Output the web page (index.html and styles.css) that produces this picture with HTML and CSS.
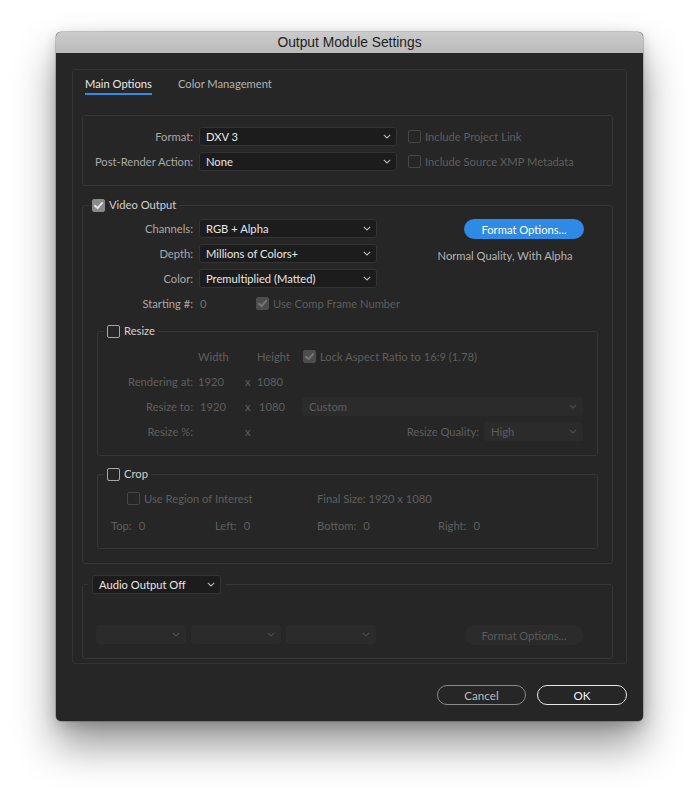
FILE: index.html
```html
<!DOCTYPE html>
<html lang="en">
<head>
<meta charset="utf-8">
<title>Output Module Settings</title>
<link rel="stylesheet" href="styles.css">
</head>
<body>
<div class="stage">
  <div class="window">
    <div class="titlebar">Output Module Settings</div>
    <div class="dialog">
      <div class="panel">
        <div class="tabs">
          <span class="tab active">Main Options</span>
          <span class="tab">Color Management</span>
        </div>

        <div class="box">
          <div class="frow">
            <span class="lbl">Format:</span>
            <div class="select w198"><span>DXV 3</span><svg class="chev" viewBox="0 0 8 5"><path d="M0.8 0.8 L4 4 L7.2 0.8"/></svg></div>
            <span class="chk dis"><span class="cb"></span>Include Project Link</span>
          </div>
          <div class="frow">
            <span class="lbl">Post-Render Action:</span>
            <div class="select w198"><span>None</span><svg class="chev" viewBox="0 0 8 5"><path d="M0.8 0.8 L4 4 L7.2 0.8"/></svg></div>
            <span class="chk dis"><span class="cb"></span>Include Source XMP Metadata</span>
          </div>
        </div>

        <fieldset class="group video">
          <legend class="legend"><span class="cb on"><svg viewBox="0 0 10 10"><path d="M1.8 5.2 L4.1 7.4 L8.3 2.6"/></svg></span>Video Output</legend>
          <div class="vtop">
            <div class="vleft">
              <div class="frow">
                <span class="lbl">Channels:</span>
                <div class="select w178"><span>RGB + Alpha</span><svg class="chev" viewBox="0 0 8 5"><path d="M0.8 0.8 L4 4 L7.2 0.8"/></svg></div>
              </div>
              <div class="frow">
                <span class="lbl">Depth:</span>
                <div class="select w178"><span>Millions of Colors+</span><svg class="chev" viewBox="0 0 8 5"><path d="M0.8 0.8 L4 4 L7.2 0.8"/></svg></div>
              </div>
              <div class="frow">
                <span class="lbl">Color:</span>
                <div class="select w178"><span>Premultiplied (Matted)</span><svg class="chev" viewBox="0 0 8 5"><path d="M0.8 0.8 L4 4 L7.2 0.8"/></svg></div>
              </div>
              <div class="frow">
                <span class="lbl">Starting #:</span>
                <span class="startval">0</span>
                <span class="chk dis"><span class="cb on"><svg viewBox="0 0 10 10"><path d="M1.8 5.2 L4.1 7.4 L8.3 2.6"/></svg></span>Use Comp Frame Number</span>
              </div>
            </div>
            <div class="vright">
              <button class="btn-blue">Format Options...</button>
              <span class="fmtinfo">Normal Quality, With Alpha</span>
            </div>
          </div>

          <fieldset class="group sub resize">
            <legend class="legend"><span class="cb"></span>Resize</legend>
            <div class="rgrid">
              <span></span>
              <span class="dim">Width</span>
              <span></span>
              <span class="dim">Height</span>
              <span class="c5"><span class="chk dis"><span class="cb on"><svg viewBox="0 0 10 10"><path d="M1.8 5.2 L4.1 7.4 L8.3 2.6"/></svg></span>Lock Aspect Ratio to 16:9 (1.78)</span></span>

              <span class="rl dim">Rendering at:</span>
              <span class="dim">1920</span>
              <span class="dim">x</span>
              <span class="dim">1080</span>
              <span></span>

              <span class="rl dim">Resize to:</span>
              <span class="dim inp">1920</span>
              <span class="dim">x</span>
              <span class="dim inp">1080</span>
              <span class="c5b"><div class="select dsel wfull"><span>Custom</span><svg class="chev" viewBox="0 0 8 5"><path d="M0.8 0.8 L4 4 L7.2 0.8"/></svg></div></span>

              <span class="rl dim">Resize %:</span>
              <span></span>
              <span class="dim">x</span>
              <span></span>
              <span class="c5q"><span class="dim">Resize Quality:</span><div class="select dsel w99"><span>High</span><svg class="chev" viewBox="0 0 8 5"><path d="M0.8 0.8 L4 4 L7.2 0.8"/></svg></div></span>
            </div>
          </fieldset>

          <fieldset class="group sub crop">
            <legend class="legend"><span class="cb"></span>Crop</legend>
            <div class="cgrid">
              <span class="roi"><span class="chk dis"><span class="cb"></span>Use Region of Interest</span></span>
              <span class="dim">Final Size: 1920 x 1080</span>
              <span></span>

              <span class="cell dim">Top:<span>0</span></span>
              <span class="cell dim">Left:<span>0</span></span>
              <span class="cell dim">Bottom:<span>0</span></span>
              <span class="cell dim">Right:<span>0</span></span>
            </div>
          </fieldset>
        </fieldset>

        <fieldset class="group audio">
          <legend class="legend alegend"><div class="select w129"><span>Audio Output Off</span><svg class="chev" viewBox="0 0 8 5"><path d="M0.8 0.8 L4 4 L7.2 0.8"/></svg></div></legend>
          <div class="arow">
            <div class="select dsel w90"><span></span><svg class="chev" viewBox="0 0 8 5"><path d="M0.8 0.8 L4 4 L7.2 0.8"/></svg></div>
            <div class="select dsel w90"><span></span><svg class="chev" viewBox="0 0 8 5"><path d="M0.8 0.8 L4 4 L7.2 0.8"/></svg></div>
            <div class="select dsel w90"><span></span><svg class="chev" viewBox="0 0 8 5"><path d="M0.8 0.8 L4 4 L7.2 0.8"/></svg></div>
            <button class="btn-dis">Format Options...</button>
          </div>
        </fieldset>
      </div>

      <div class="actions">
        <button class="btn-cancel">Cancel</button>
        <button class="btn-ok">OK</button>
      </div>
    </div>
  </div>
</div>
</body>
</html>
```

FILE: styles.css
```css
* { box-sizing: border-box; }

html, body {
  height: 100%;
}

body {
  margin: 0;
  background: #ffffff;
  font-family: Lato, "Open Sans", sans-serif;
  font-size: 11.2px;
  color: #a8a8a8;
}

.stage {
  min-height: 800px;
  padding: 32px 0 80px 56px;
}

.window {
  width: 587px;
  background: #262626;
  border-radius: 5px;
  box-shadow: 0 24px 42px rgba(0, 0, 0, 0.42), 0 4px 14px rgba(0, 0, 0, 0.18), 0 0 0 0.5px rgba(0, 0, 0, 0.35);
  overflow: hidden;
}

.titlebar {
  height: 21px;
  line-height: 21px;
  text-align: center;
  background: linear-gradient(#cbcbcb, #bababa);
  color: #1e1e1e;
  font-family: "Liberation Sans", Arial, sans-serif;
  font-size: 13.8px;
}

.dialog {
  padding: 16px 16px 16px 16px;
}

.panel {
  border: 1px solid #333333;
  border-radius: 3px;
  padding: 6px 13px 4px 9px;
}

.tabs {
  display: flex;
  gap: 26px;
  margin-left: 3px;
  margin-bottom: 20px;
}

.tab {
  line-height: 16px;
  padding-bottom: 1px;
  border-bottom: 2px solid transparent;
  color: #b2b2b2;
}

.tab.active {
  color: #e8e8e8;
  border-bottom-color: #2d8ceb;
}

.box {
  border: 1px solid #363636;
  border-radius: 3px;
  padding: 11px 0 14px 0;
  display: flex;
  flex-direction: column;
  gap: 6px;
}

.frow {
  display: flex;
  align-items: center;
  height: 19px;
  white-space: nowrap;
}

.lbl {
  flex: none;
  width: 110px;
  margin-right: 6px;
  text-align: right;
  color: #a8a8a8;
}

.select {
  flex: none;
  height: 19px;
  border: 1px solid #333333;
  background: #1c1c1c;
  border-radius: 3px;
  color: #e6e6e6;
  display: flex;
  align-items: center;
  justify-content: space-between;
  padding: 0 5px 0 6px;
}

.chev {
  width: 8px;
  height: 5px;
  flex: none;
}

.chev path {
  fill: none;
  stroke: #b8b8b8;
  stroke-width: 1.1;
}

.dsel {
  background: #2b2b2b;
  border-color: #2b2b2b;
  color: #5e5e5e;
}

.dsel .chev path {
  stroke: #4e4e4e;
}

.w198 { width: 198px; margin-right: 11px; }
.w178 { width: 178px; }
.w129 { width: 129px; }
.w99 { width: 99px; }
.w90 { width: 90px; }
.wfull { width: 281px; }

.chk {
  display: flex;
  align-items: center;
  gap: 4px;
  color: #c8c8c8;
  white-space: nowrap;
}

.chk.dis {
  color: #5e5e5e;
}

.cb {
  flex: none;
  width: 13px;
  height: 13px;
  border: 1.5px solid #a6a6a6;
  border-radius: 2px;
  display: inline-flex;
  align-items: center;
  justify-content: center;
}

.cb svg {
  width: 11px;
  height: 11px;
}

.cb svg path {
  fill: none;
  stroke: #e4e4e4;
  stroke-width: 1.7;
  stroke-linecap: round;
  stroke-linejoin: round;
}

.cb.on {
  background: #8a8a8a;
  border-color: #8a8a8a;
}

.dis .cb {
  border-color: #474747;
}

.dis .cb.on {
  background: #4d4d4d;
  border-color: #4d4d4d;
}

.dis .cb.on svg path {
  stroke: #767676;
}

.group {
  border: 1px solid #363636;
  border-radius: 3px;
  margin: 11px 0 0 0;
  padding: 0;
  min-width: 0;
}

.legend {
  margin-left: 6px;
  padding: 0 3px;
  display: flex;
  align-items: center;
  gap: 4px;
  line-height: 16px;
  color: #d0d0d0;
}

.vtop {
  display: flex;
  margin-top: 6px;
}

.vleft {
  flex: none;
  width: 294px;
  display: flex;
  flex-direction: column;
  gap: 6px;
}

.startval {
  flex: none;
  width: 57px;
  padding-left: 1px;
  color: #6e6e6e;
}

.vright {
  flex: none;
  width: 120px;
  margin-left: 87px;
  display: flex;
  flex-direction: column;
  align-items: center;
}

.btn-blue {
  width: 120px;
  height: 20px;
  border: none;
  border-radius: 10px;
  background: #2f8ae6;
  color: #ffffff;
  font-family: inherit;
  font-size: 11.2px;
  padding: 0;
}

.fmtinfo {
  margin-top: 8px;
  margin-right: 38px;
  line-height: 18px;
  color: #b4b4b4;
  white-space: nowrap;
}

.sub {
  margin: 10px 14px 0 14px;
}

.crop {
  margin-bottom: 14px;
}

.dim {
  color: #5f5f5f;
}

.rgrid {
  display: grid;
  grid-template-columns: 100px 47px 12px 45px 281px;
  grid-auto-rows: 20px;
  row-gap: 5px;
  align-items: center;
  margin-top: 7px;
  padding-bottom: 14px;
}

.rl {
  text-align: right;
  padding-right: 5px;
}

.inp {
  padding-left: 2px;
}

.c5 {
  padding-left: 1px;
}

.c5q {
  display: flex;
  align-items: center;
  justify-content: flex-end;
  gap: 5px;
}

.cgrid {
  display: grid;
  grid-template-columns: 104px 102px 121px auto;
  grid-auto-rows: 20px;
  row-gap: 7px;
  align-items: center;
  margin-top: 6px;
  padding: 0 0 13px 13px;
}

.roi {
  grid-column: span 2;
  padding-left: 16px;
}

.cell {
  display: flex;
  gap: 7px;
}

.audio {
  margin-top: 11px;
}

.alegend {
  margin-left: 5px;
  padding: 0 4px;
  line-height: 19px;
}

.arow {
  display: flex;
  align-items: flex-start;
  gap: 5px;
  margin-top: 31px;
  padding: 0 0 13px 13px;
}

.btn-dis {
  margin-left: 83px;
  width: 120px;
  height: 20px;
  border: none;
  border-radius: 10px;
  background: #2b2b2b;
  color: #595959;
  font-family: inherit;
  font-size: 11.2px;
  padding: 0;
}

.actions {
  display: flex;
  justify-content: flex-end;
  gap: 11px;
  margin-top: 21px;
}

.actions button {
  height: 20px;
  border-radius: 10px;
  background: transparent;
  font-family: inherit;
  font-size: 11.6px;
  padding: 0;
}

.btn-cancel {
  width: 89px;
  border: 1.5px solid #8a8a8a;
  color: #bcbcbc;
}

.btn-ok {
  width: 90px;
  border: 1.5px solid #e6e6e6;
  color: #f2f2f2;
}
```
